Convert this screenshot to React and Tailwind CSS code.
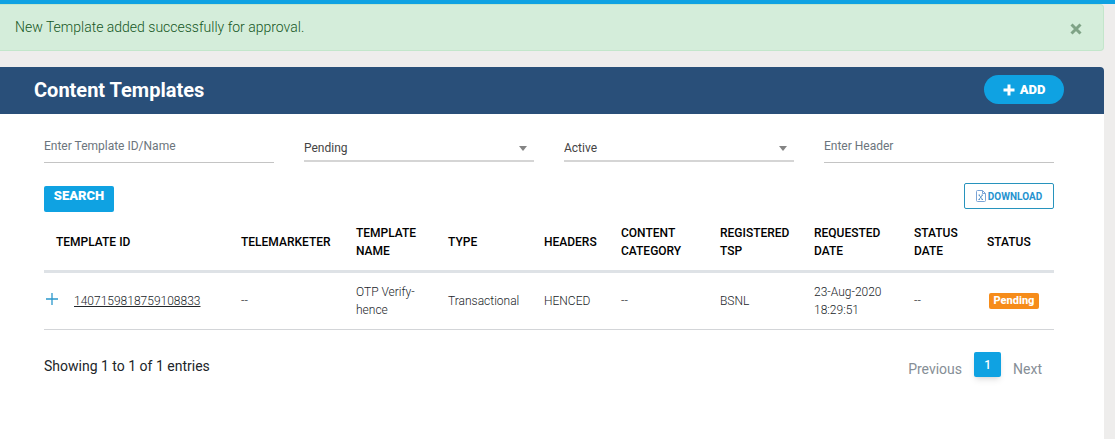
const columns = [
  { title: 'TEMPLATE ID', width: 'w-[185px]' },
  { title: 'TELEMARKETER', width: 'w-[115px]' },
  { title: 'TEMPLATE NAME', width: 'w-[92px]' },
  { title: 'TYPE', width: 'w-[96px]' },
  { title: 'HEADERS', width: 'w-[77px]' },
  { title: 'CONTENT CATEGORY', width: 'w-[99px]' },
  { title: 'REGISTERED TSP', width: 'w-[94px]' },
  { title: 'REQUESTED DATE', width: 'w-[100px]' },
  { title: 'STATUS DATE', width: 'w-[73px]' },
  { title: 'STATUS', width: 'w-[79px]' },
];

const templates = [
  {
    id: '1407159818759108833',
    telemarketer: '--',
    name: 'OTP Verify-hence',
    type: 'Transactional',
    header: 'HENCED',
    category: '--',
    tsp: 'BSNL',
    requested: '23-Aug-2020 18:29:51',
    statusDate: '--',
    status: 'Pending',
  },
];

function Alert() {
  return (
    <div
      role="alert"
      className="mr-[11px] flex h-[47px] items-center justify-between rounded-r border border-l-0 border-[#c3e6cb] bg-[#d4edda] pr-5 pb-0.5 pl-[15px] text-sm font-light text-[#155724]"
    >
      <span>New Template added successfully for approval.</span>
      <button type="button" aria-label="Close" className="pt-1">
        <svg viewBox="0 0 14 14" className="size-3.5" fill="none" stroke="#7fa386" strokeWidth="3">
          <path d="M2.5 2.5l9 9M11.5 2.5l-9 9" />
        </svg>
      </button>
    </div>
  );
}

function TextFilter({ label }) {
  return (
    <input
      type="text"
      aria-label={label}
      placeholder={label}
      className="h-[31px] w-full min-w-0 border-b border-[#c4c4c4] pb-0.5 text-xs placeholder:text-[#6c757d] focus:outline-none"
    />
  );
}

function SelectFilter({ label, options }) {
  return (
    <div className="relative">
      <select
        aria-label={label}
        className="h-[30px] w-full appearance-none border-b-2 border-[#d5d5d5] pt-1 text-xs text-[#444] focus:outline-none"
      >
        {options.map((option) => (
          <option key={option}>{option}</option>
        ))}
      </select>
      <svg viewBox="0 0 8 5" className="pointer-events-none absolute top-3.5 right-[7px] h-[5px] w-2" fill="#848484">
        <path d="M0 0h8L4 5z" />
      </svg>
    </div>
  );
}

// sheet with a folded corner and an X
function ExcelIcon() {
  return (
    <svg viewBox="0 0 10 12" className="h-3 w-2.5" fill="none" stroke="#7ba3d6">
      <path d="M.5 1.5q0-1 1-1h5l3 3v7q0 1-1 1h-7q-1 0-1-1zM6.5.5v3h3" />
      <path d="M3 5l3.5 4.5M6.5 5L3 9.5M2.5 5H4M5.5 5H7M2.500 9.500H4M5.500 9.500H7" stroke="#4484c0" strokeWidth=".8" />
    </svg>
  );
}

function TemplateRow({ item }) {
  return (
    <tr className="border-b border-[#d3d5d8]">
      <td className="py-2.5 pl-0.5">
        <div className="flex items-center gap-4">
          <button type="button" aria-label="Expand row" className="pb-1">
            <svg viewBox="0 0 12 12" className="size-3" fill="none" stroke="#2b98cc">
              <path d="M6 0v12M0 6h12" strokeWidth="1.3" />
            </svg>
          </button>
          <a href="#template" className="text-[#212529] underline">{item.id}</a>
        </div>
      </td>
      <td className="px-3 py-2.5">{item.telemarketer}</td>
      <td className="px-3 py-2.5">{item.name}</td>
      <td className="py-2.5 pl-3">{item.type}</td>
      <td className="px-3 py-2.5">{item.header}</td>
      <td className="px-3 py-2.5">{item.category}</td>
      <td className="px-3 py-2.5">{item.tsp}</td>
      <td className="px-3 py-2.5">{item.requested}</td>
      <td className="px-3 py-2.5">{item.statusDate}</td>
      <td className="py-2.5 pl-3.5">
        <span className="block w-[50px] rounded-xs bg-[#f68c1a] text-center text-[11px] leading-4 font-extrabold text-white">
          {item.status}
        </span>
      </td>
    </tr>
  );
}

export default function App() {
  return (
    <div className="flex min-h-screen flex-col border-t-4 border-[#0fa2e2] bg-[#eeedec] font-[Roboto,'Liberation_Sans',sans-serif]">
      <Alert />

      <main className="mt-4 mr-[11px] grow rounded-tr bg-white">
        <header className="flex h-[47px] items-center justify-between rounded-tr bg-[#294f79] pr-10 pb-0.5 pl-[34px]">
          <h1 className="text-xl font-bold text-white">Content Templates</h1>
          <button
            type="button"
            className="flex h-[29px] w-20 items-center justify-center gap-[5px] rounded-full bg-[#0fa2e2] text-[13px] font-black text-white"
          >
            <svg viewBox="0 0 12 12" className="size-3" fill="none" stroke="currentColor" strokeWidth="3">
              <path d="M6 .5v11M.5 6h11" />
            </svg>
            ADD
          </button>
        </header>

        <div className="pt-[18px] pr-[50px] pb-8 pl-11">
          <form>
            <div className="grid grid-cols-4 gap-[30px]">
              <TextFilter label="Enter Template ID/Name" />
              <SelectFilter label="Approval status" options={['Pending', 'Approved', 'Rejected']} />
              <SelectFilter label="Template state" options={['Active', 'Inactive']} />
              <TextFilter label="Enter Header" />
            </div>

            <div className="mt-5 flex items-start justify-between">
              <button
                type="submit"
                className="mt-[3px] h-[26px] w-[70px] rounded-xs bg-[#0fa2e2] pb-1.5 text-[13px] font-black text-white"
              >
                SEARCH
              </button>
              <button
                type="button"
                className="flex h-[26px] w-[90px] items-center justify-center gap-0.5 rounded-xs border border-[#2793bd] text-[10px] font-bold text-[#2793cf]"
              >
                <ExcelIcon />
                DOWNLOAD
              </button>
            </div>
          </form>

          <table className="mt-0.5 w-full table-fixed text-left text-xs leading-[18px] font-light text-[#212529]">
            <thead>
              <tr className="border-b-3 border-[#dee2e6]">
                {columns.map((col) => (
                  <th key={col.title} scope="col" className={`${col.width} py-2.5 pl-3 font-medium text-black`}>
                    {col.title}
                  </th>
                ))}
              </tr>
            </thead>
            <tbody>
              {templates.map((item) => (
                <TemplateRow key={item.id} item={item} />
              ))}
            </tbody>
          </table>

          <div className="mt-[22px] flex items-start justify-between text-sm">
            <p className="pt-1 text-[#212529]">Showing 1 to 1 of 1 entries</p>
            <nav aria-label="Pagination" className="flex items-start pr-3 text-[#868e96]">
              <button type="button" className="mt-[7px]">Previous</button>
              <button
                type="button"
                aria-current="page"
                className="mx-3 h-[25px] w-[27px] rounded-xs bg-[#0fa2e2] text-xs font-medium text-white shadow-md"
              >
                1
              </button>
              <button type="button" className="mt-[7px]">Next</button>
            </nav>
          </div>
        </div>
      </main>
    </div>
  );
}
